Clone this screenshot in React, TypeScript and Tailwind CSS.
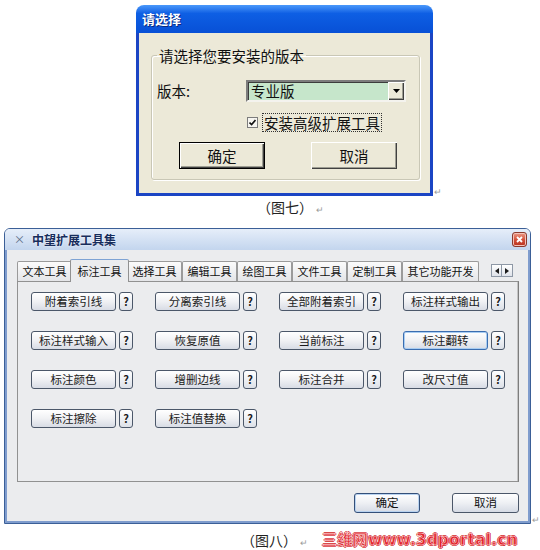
import React from 'react';

const tabs = ['文本工具', '标注工具', '选择工具', '编辑工具', '绘图工具', '文件工具', '定制工具', '其它功能开发'];

const tools = [
  '附着索引线', '分离索引线', '全部附着索引', '标注样式输出',
  '标注样式输入', '恢复原值', '当前标注', '标注翻转',
  '标注颜色', '增删边线', '标注合并', '改尺寸值',
  '标注擦除', '标注值替换',
];

// classic raised 3D edge used by the XP dialog buttons
const raised = 'shadow-[inset_1px_1px_0_#fff,inset_-1px_-1px_0_#404040,inset_-2px_-2px_0_#9d9d92]';

function ReturnMark() {
  return <span className="text-[9px] leading-none text-[#9a9a9a]">↵</span>;
}

function SelectDialog() {
  return (
    <div className="ml-[136px] mt-[5px] flex items-end gap-[1px]">
      <div className="flex h-[191px] w-[297px] flex-col overflow-hidden rounded-t-[8px]">
        <div className="flex h-[28px] shrink-0 items-center bg-linear-to-b from-[#4a98fa] via-[#0e5fe4] via-30% to-[#0850d6] px-[6px] text-[13px] font-bold text-white [text-shadow:1px_1px_0_#0a2a80]">
          请选择
        </div>
        <div className="flex flex-1 flex-col border-x-[3px] border-b-[3px] border-[#1b45c4] bg-[#ece9d8] pl-[12px] pr-[10px] pb-[13px] pt-[14px] text-[14.5px] text-[#111]">
          <fieldset className="flex-1 rounded-[3px] border border-[#c9c7b6] pt-[16px] shadow-[1px_1px_0_#fff,inset_1px_1px_0_#fff]">
            <legend className="ml-[5px] px-[2px] leading-[17px]">请选择您要安装的版本</legend>
            <div className="flex h-[22px] items-center">
              <span className="w-[94px] pl-[5px]">版本:</span>
              <div className="flex h-[22px] w-[160px] border-2 border-b-[#f4f3ee] border-l-[#7c7c7c] border-r-[#f4f3ee] border-t-[#7c7c7c] bg-[#c6e6cb] shadow-[inset_1px_1px_0_#3c3c3c]">
                <span className="flex-1 pl-[3px] leading-[18px]">专业版</span>
                <div className={`flex w-[16px] items-center justify-center bg-[#ece9d8] ${raised}`}>
                  <svg width="7" height="4" viewBox="0 0 7 4">
                    <polygon points="0,0 7,0 3.5,4" fill="#000" />
                  </svg>
                </div>
              </div>
            </div>
            <div className="mt-[11px] flex h-[19px] items-center">
              <div className="ml-[95px] flex h-[11px] w-[11px] items-center justify-center border border-[#7c7c7c] bg-[#f6f5f0]">
                <svg width="7" height="7" viewBox="0 0 7 7">
                  <path d="M0.5 3.5 L2.6 5.6 L6.5 1" stroke="#111" strokeWidth="1.6" fill="none" />
                </svg>
              </div>
              <span className="ml-[4px] border border-dotted border-[#333] px-[1px] leading-[17px]">安装高级扩展工具</span>
            </div>
            <div className="mt-[10px] flex">
              <button className={`ml-[27px] h-[27px] w-[86px] border border-black bg-[#ece9d8] ${raised}`}>确定</button>
              <button className={`ml-[46px] h-[27px] w-[86px] bg-[#ece9d8] ${raised}`}>取消</button>
            </div>
          </fieldset>
        </div>
      </div>
      <ReturnMark />
    </div>
  );
}

function ToolButton({ label, focused }: { label: string; focused?: boolean }) {
  return (
    <div className="flex items-center gap-[3px]">
      <button
        className={`h-[19px] w-[85px] rounded-[3px] border bg-linear-to-b from-white via-[#f0f1f4] to-[#d8dce5] text-[11.5px] leading-none text-[#1a1a1a] ${
          focused ? 'border-[#3a6db0] shadow-[inset_0_0_0_1px_#a9cdf2]' : 'border-[#4b5769]'
        }`}
      >
        {label}
      </button>
      <button className="h-[19px] w-[14px] rounded-[3px] border border-[#4b5769] bg-linear-to-b from-white to-[#dde1e8] text-[11px] font-bold leading-none text-[#1a1a1a]">
        ?
      </button>
    </div>
  );
}

function ToolsDialog() {
  return (
    <div className="ml-[4px] mt-[10px] flex items-end gap-[1px]">
      <div className="flex h-[296px] w-[528px] flex-col overflow-hidden rounded-t-[6px] border border-[#3b5f97]">
        {/* title bar */}
        <div className="flex h-[21px] shrink-0 items-center bg-linear-to-b from-[#e6eef9] to-[#c3d5ee] pl-[9px] pr-[3px]">
          <span className="text-[11px] leading-none text-[#5a6b85]">×</span>
          <span className="ml-[7px] text-[12px] font-bold text-[#172d5c] [text-shadow:0_0_2px_#fff]">中望扩展工具集</span>
          <div className="ml-auto flex h-[15px] w-[15px] items-center justify-center rounded-[3px] border border-[#8a3a2e] bg-linear-to-b from-[#eb9a88] via-[#d4523c] to-[#b8301c] shadow-[inset_0_0_0_1px_#f3c2b8]">
            <svg width="7" height="7" viewBox="0 0 7 7">
              <path d="M1 1 L6 6 M6 1 L1 6" stroke="#fff" strokeWidth="1.8" />
            </svg>
          </div>
        </div>

        <div className="flex flex-1 flex-col border-x-2 border-b-2 border-[#7f9ccd] bg-[#ebecee] pl-[10px] pr-[9px] pt-[8px]">
          {/* tab strip */}
          <div className="flex h-[23px] items-end">
            {tabs.map((t, i) =>
              i === 1 ? (
                <div
                  key={t}
                  className="relative z-10 -mx-[2px] -mb-px flex h-[23px] items-center rounded-t-[2px] border border-b-0 border-[#919191] border-t-[#7ea3d4] bg-[#ebecee] px-[6.5px] text-[11px] text-[#111]"
                >
                  {t}
                </div>
              ) : (
                <div
                  key={t}
                  className="flex h-[20px] items-center rounded-t-[2px] border border-b-0 border-[#9a9a9a] bg-linear-to-b from-[#fbfbfb] to-[#e4e5e8] px-[4.5px] text-[11px] text-[#111]"
                >
                  {t}
                </div>
              )
            )}
            <div className="mb-[4px] ml-auto mr-[6px] flex">
              <div className="flex h-[13px] w-[11px] items-center justify-center border border-[#8e98a6] bg-linear-to-b from-white to-[#dfe3ea]">
                <svg width="4" height="6" viewBox="0 0 4 6"><polygon points="4,0 4,6 0,3" fill="#1a1a1a" /></svg>
              </div>
              <div className="flex h-[13px] w-[11px] items-center justify-center border border-l-0 border-[#8e98a6] bg-linear-to-b from-white to-[#dfe3ea]">
                <svg width="4" height="6" viewBox="0 0 4 6"><polygon points="0,0 0,6 4,3" fill="#1a1a1a" /></svg>
              </div>
            </div>
          </div>

          {/* tab page */}
          <div className="h-[201px] border border-[#919191] border-r-[#7d7d7d] bg-[#ebecee] pl-[13px] pt-[10px] shadow-[inset_-1px_0_0_#c4c4c4]">
            <div className="grid grid-cols-[repeat(4,102px)] gap-x-[22px] gap-y-[20px]">
              {tools.map((t) => (
                <ToolButton key={t} label={t} focused={t === '标注翻转'} />
              ))}
            </div>
          </div>

          <div className="mt-[11px] flex justify-end gap-[32px]">
            <button className="h-[20px] w-[66px] rounded-[3px] border border-[#34507a] bg-linear-to-b from-white via-[#eef0f4] to-[#d6dbe5] text-[11.5px] leading-none shadow-[inset_0_0_0_1px_#b9d3f0]">
              确定
            </button>
            <button className="h-[20px] w-[67px] rounded-[3px] border border-[#4b5769] bg-linear-to-b from-white via-[#eef0f4] to-[#d6dbe5] text-[11.5px] leading-none">
              取消
            </button>
          </div>
        </div>
      </div>
      <ReturnMark />
    </div>
  );
}

export default function App() {
  return (
    <div className="h-[550px] w-[540px] overflow-hidden bg-white font-['Noto_Sans_CJK_SC','Noto_Sans',sans-serif] text-[#111]">
      <SelectDialog />

      <div className="flex h-[22px] items-center pl-[257px] text-[14px] text-[#222]">
        <span>（图七）</span>
        <span className="ml-[3px]"><ReturnMark /></span>
      </div>

      <ToolsDialog />

      <div className="mt-[5px] flex h-[22px] items-center pl-[241px] text-[14px] text-[#222]">
        <span>（图八）</span>
        <span className="ml-[3px]"><ReturnMark /></span>
        <span className="ml-[14px] font-['DejaVu_Sans','Noto_Sans_CJK_SC',sans-serif] text-[15px] font-bold tracking-[0.4px] text-[#e3232b] [-webkit-text-stroke:0.5px_#fff] [text-shadow:1px_0_0_#d01820,-1px_0_0_#d01820,0_1px_0_#d01820,0_-1px_0_#d01820]">
          三维网www.3dportal.cn
        </span>
      </div>
    </div>
  );
}
